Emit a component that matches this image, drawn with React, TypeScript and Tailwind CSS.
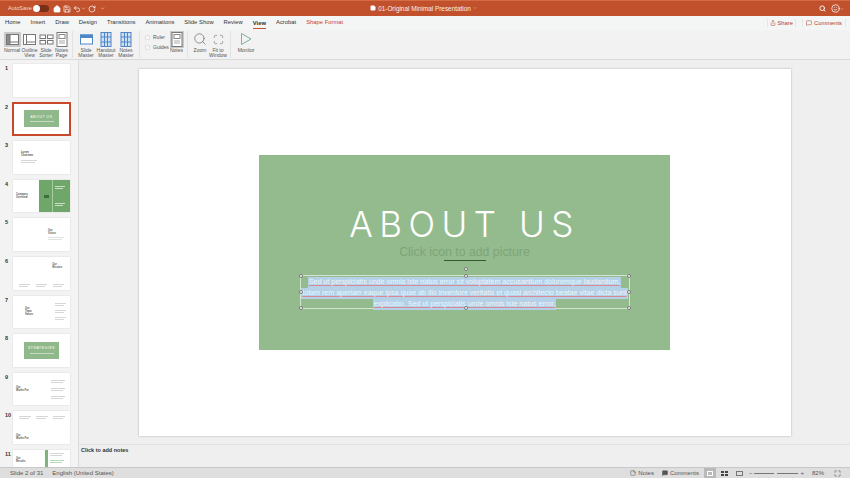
import { ReactNode } from "react";
import { Home, Save, Undo2, RotateCw, Search, Smile, Share, MessageSquare, ChevronDown, StickyNote, Maximize } from "lucide-react";

const tabs = ["Home", "Insert", "Draw", "Design", "Transitions", "Animations", "Slide Show", "Review", "View", "Acrobat", "Shape Format"];

function Bars({ n = 2, w = 14, color = "bg-[#d6d6d6]" }: { n?: number; w?: number; color?: string }) {
  return (
    <div className="flex flex-col gap-px">
      {Array.from({ length: n }).map((_, i) => (
        <div key={i} className={`h-px ${color}`} style={{ width: w - i * 2 }} />
      ))}
    </div>
  );
}

function Title({ lines }: { lines: string[] }) {
  return (
    <div className="text-[2.6px] font-semibold leading-[3px] text-[#555]">
      {lines.map((l) => (
        <div key={l}>{l}</div>
      ))}
    </div>
  );
}

function GreenCenter({ label }: { label: string }) {
  return (
    <div className="flex h-full items-center justify-center">
      <div className="flex h-[17px] w-[35px] flex-col items-center justify-center gap-[2px] bg-[#8fb98a]">
        <div className="text-[3.4px] leading-none tracking-[0.6px] text-white">{label}</div>
        <div className="h-px w-[24px] bg-[#c3dcc0]" />
      </div>
    </div>
  );
}

const slides: ReactNode[] = [
  null,
  <GreenCenter label="ABOUT US" />,
  <div className="flex h-full flex-col justify-center gap-[3px] pl-[8px]">
    <Title lines={["Lorem", "Chairman"]} />
    <Bars w={16} />
  </div>,
  <div className="flex h-full">
    <div className="flex w-[26px] flex-col justify-center pl-[3px]">
      <Title lines={["Company", "Overview"]} />
    </div>
    <div className="flex flex-1 items-center justify-between bg-[#6fa76b] px-[5px]">
      <div className="h-[3px] w-[5px] bg-[#3e6f3b]" />
      <div className="flex h-full flex-col justify-around border-l border-[#a8cba5] pl-[2px]">
        <Bars w={10} color="bg-[#c8dfc6]" />
        <Bars w={10} color="bg-[#c8dfc6]" />
      </div>
    </div>
  </div>,
  <div className="flex h-full flex-col items-end justify-center gap-[2px] pr-[6px]">
    <div className="w-[16px]">
      <Title lines={["Our", "Vision"]} />
    </div>
    <Bars w={16} color="bg-[#e0e0e0]" />
  </div>,
  <div className="flex h-full flex-col justify-between pb-[3px] pt-[6px]">
    <div className="flex justify-end pr-[8px]">
      <Title lines={["Our", "Mission"]} />
    </div>
    <div className="flex justify-around px-[3px]">
      <Bars w={11} />
      <Bars w={11} />
      <Bars w={11} />
    </div>
  </div>,
  <div className="flex h-full items-center justify-between pl-[12px] pr-[4px]">
    <Title lines={["Our", "Team", "Values"]} />
    <div className="flex flex-col gap-[4px]">
      <Bars w={11} />
      <Bars w={11} />
      <Bars w={11} />
    </div>
  </div>,
  <GreenCenter label="STRATEGIES" />,
  <div className="flex h-full items-center justify-between pl-[3px] pr-[5px]">
    <Title lines={["Our", "Works For"]} />
    <div className="flex flex-col gap-[5px]">
      <Bars w={14} />
      <Bars w={14} />
      <Bars w={14} />
    </div>
  </div>,
  <div className="flex h-full flex-col justify-between pb-[4px] pt-[5px]">
    <div className="flex justify-around px-[3px]">
      <Bars w={12} />
      <Bars w={12} />
      <Bars w={12} />
    </div>
    <div className="pl-[3px]">
      <Title lines={["Our", "Works For"]} />
    </div>
  </div>,
  <div className="flex h-full">
    <div className="w-[32px] pl-[3px] pt-[7px]">
      <Title lines={["Our", "Results"]} />
    </div>
    <div className="h-full w-[3px] bg-[#7fb47b]" />
    <div className="flex flex-1 flex-col gap-[4px] pl-[2px] pt-[3px]">
      <Bars w={14} />
      <Bars w={14} color="bg-[#b9d8b6]" />
    </div>
  </div>,
];

function RibbonItem({ icon, label, width }: { icon: ReactNode; label: string; width: number }) {
  return (
    <div className="flex shrink-0 flex-col items-center" style={{ width }}>
      <div className="flex h-[16px] items-center justify-center">{icon}</div>
      <div className="whitespace-pre-line pt-[1px] text-center text-[5px] leading-[5.4px] text-[#555]">{label}</div>
    </div>
  );
}

function Sep() {
  return <div className="mx-[3px] h-[27px] w-px shrink-0 bg-[#e2e2e2]" />;
}

function PageIcon({ kind }: { kind: string }) {
  const blue = "#4f86c6";
  return (
    <svg width="15" height="13" viewBox="0 0 15 13" fill="none" stroke="#777">
      {kind === "normal" && (
        <>
          <rect x="1.5" y="1.5" width="12" height="10" fill="#fff" />
          <rect x="1.5" y="1.5" width="3.5" height="10" fill="#8a8a8a" />
          <line x1="5" y1="9" x2="13.5" y2="9" />
        </>
      )}
      {kind === "outline" && (
        <>
          <rect x="1.5" y="1.5" width="12" height="10" fill="#fff" />
          <line x1="4.5" y1="1.5" x2="4.5" y2="11.5" />
          <line x1="5" y1="9" x2="13.5" y2="9" />
        </>
      )}
      {kind === "sorter" && (
        <>
          <rect x="1" y="2" width="5.5" height="3.5" fill="#fff" />
          <rect x="8.5" y="2" width="5.5" height="3.5" fill="#fff" />
          <rect x="1" y="7.5" width="5.5" height="3.5" fill="#fff" />
          <rect x="8.5" y="7.5" width="5.5" height="3.5" fill="#fff" />
        </>
      )}
      {kind === "master" && (
        <>
          <rect x="1.5" y="2" width="12" height="9" fill="#fff" stroke={blue} />
          <rect x="1.5" y="2" width="12" height="2.5" fill={blue} stroke={blue} />
        </>
      )}
    </svg>
  );
}

function TallPage({ blue, lines }: { blue?: boolean; lines?: boolean }) {
  return (
    <svg width="12" height="15" viewBox="0 0 12 15" fill="none">
      <rect x="1" y="0.5" width="10" height="14" fill={blue ? "#cfe0f3" : "#fff"} stroke={blue ? "#4f86c6" : "#777"} />
      {blue ? (
        <path d="M1 5h10M1 10h10M4.5.5v14M7.5.5v14" stroke="#4f86c6" />
      ) : (
        <>
          <rect x="3" y="2.5" width="6" height="4" stroke="#888" />
          {lines && <path d="M3 9h6M3 11h6" stroke="#aaa" />}
        </>
      )}
    </svg>
  );
}

function Handle({ className }: { className: string }) {
  return <div className={`absolute size-[4px] rounded-full border border-[#777] bg-white ${className}`} />;
}

function SelLine({ children }: { children: string }) {
  return (
    <div className="flex h-[11px] justify-center">
      <span className="whitespace-nowrap bg-[#b4d1e8] px-[1px] text-[7.1px] leading-[11px] text-[#eef5fa] underline decoration-[#d88b96]">
        {children}
      </span>
    </div>
  );
}

export default function App() {
  return (
    <div className="flex h-[478px] w-[850px] flex-col overflow-hidden bg-[#efefef] font-['Liberation_Sans',sans-serif]">
      {/* Title bar */}
      <div className="flex h-[16px] shrink-0 items-center border-t border-[#d66c45] bg-[#c1512c] pl-[8px] pr-[6px] text-white">
        <span className="w-[23px] text-[5.5px] text-[#f5d9cd]">AutoSave</span>
        <div className="ml-[2px] flex h-[7px] w-[16px] items-center rounded-full bg-[#7a2f18]">
          <div className="size-[7px] rounded-full bg-white" />
        </div>
        <Home size={8} className="ml-[4px]" fill="white" />
        <Save size={8} className="ml-[2px]" />
        <Undo2 size={8} className="ml-[2px]" />
        <ChevronDown size={5} />
        <RotateCw size={8} className="ml-[2px]" />
        <ChevronDown size={5} className="ml-[4px]" />
        <div className="flex flex-1 items-center justify-center gap-[2px] pr-[77px] text-[6.4px] text-[#fbeee8]">
          <StickyNote size={6} fill="white" />
          <span>01-Original Minimal Presentation</span>
          <ChevronDown size={4} />
        </div>
        <Search size={7} strokeWidth={3} className="mr-[5px]" />
        <Smile size={9} />
        <ChevronDown size={4} />
      </div>

      {/* Tabs */}
      <div className="flex h-[14px] shrink-0 items-center bg-[#f4f6f5] pl-[5px] pr-[4px] text-[5.85px] text-[#333]">
        <div className="flex gap-[10px]">
          {tabs.map((t) => (
            <span
              key={t}
              className={
                t === "View"
                  ? "border-b border-[#c1512c] font-bold leading-[10px]"
                  : t === "Shape Format"
                    ? "text-[#c8443a]"
                    : ""
              }
            >
              {t}
            </span>
          ))}
        </div>
        <div className="ml-auto flex items-center gap-[6px] text-[5.8px] text-[#b0402a]">
          <div className="flex items-center gap-[2px] border-x border-[#e6e6e6] px-[2px]">
            <Share size={6} />
            <span>Share</span>
          </div>
          <div className="flex items-center gap-[2px] border-x border-[#e6e6e6] px-[3px]">
            <MessageSquare size={6} />
            <span>Comments</span>
          </div>
        </div>
      </div>

      {/* Ribbon */}
      <div className="flex h-[30px] shrink-0 items-start border-b border-[#d9d9d9] bg-[#f2f2f2] pl-[3px] pt-[1px]">
        <RibbonItem width={18} label="Normal" icon={<div className="rounded-[1px] bg-[#c9c9c9] p-[1px]"><PageIcon kind="normal" /></div>} />
        <RibbonItem width={17} label={"Outline\nView"} icon={<PageIcon kind="outline" />} />
        <RibbonItem width={16} label={"Slide\nSorter"} icon={<PageIcon kind="sorter" />} />
        <RibbonItem width={15} label={"Notes\nPage"} icon={<TallPage lines />} />
        <Sep />
        <RibbonItem width={20} label={"Slide\nMaster"} icon={<PageIcon kind="master" />} />
        <RibbonItem width={20} label={"Handout\nMaster"} icon={<TallPage blue />} />
        <RibbonItem width={20} label={"Notes\nMaster"} icon={<TallPage blue />} />
        <Sep />
        <div className="flex w-[26px] shrink-0 flex-col gap-[5px] pl-[2px] pt-[4px] text-[5px] leading-[5px] text-[#555]">
          <div className="flex items-center gap-[3px]"><div className="size-[5px] rounded-[1px] border border-[#e0e0e0] bg-[#f8f8f8]" />Ruler</div>
          <div className="flex items-center gap-[3px]"><div className="size-[5px] rounded-[1px] border border-[#e0e0e0] bg-[#f8f8f8]" />Guides</div>
        </div>
        <RibbonItem width={15} label="Notes" icon={<div className="bg-[#c9c9c9] p-px"><TallPage lines /></div>} />
        <Sep />
        <RibbonItem width={18} label="Zoom" icon={<Search size={14} strokeWidth={1.2} color="#666" />} />
        <RibbonItem width={18} label={"Fit to\nWindow"} icon={<Maximize size={11} strokeWidth={1.2} color="#666" />} />
        <Sep />
        <RibbonItem
          width={24}
          label="Monitor"
          icon={
            <svg width="12" height="14" viewBox="0 0 12 14" fill="none">
              <path d="M1.5 1.5 11 7l-9.5 5.5z" stroke="#7fb09a" />
            </svg>
          }
        />
      </div>

      {/* Main */}
      <div className="flex min-h-0 flex-1">
        <div className="w-[79px] shrink-0 overflow-hidden border-r border-[#dcdcdc] bg-[#f3f3f3] pt-[4px]">
          {slides.map((content, i) => (
            <div key={i} className="mb-[6px] flex pl-[5px]">
              <span className="w-[8px] text-[5.5px] font-bold leading-[8px] text-[#333]">{i + 1}</span>
              <div
                className={`h-[32.6px] w-[57px] shrink-0 overflow-hidden bg-white ${
                  i === 1 ? "outline-2 -outline-offset-1 outline-[#c9472b]" : "shadow-[0_0_1px_#bbb]"
                }`}
              >
                {content}
              </div>
            </div>
          ))}
        </div>

        <div className="flex min-w-0 flex-1 flex-col">
          <div className="flex h-[384px] shrink-0 items-start justify-center pt-[9px]">
            <div className="flex h-[367px] w-[652px] items-center justify-center bg-white shadow-[0_0_2px_#aaa]">
              <div className="flex h-[195px] w-[411px] flex-col items-center bg-[#94bb8e] pt-[52px]">
                <div className="font-['Inter',sans-serif] text-[35px] font-light leading-[34px] tracking-[6.5px] text-white">
                  ABOUT US
                </div>
                <div className="mt-[4px] text-[12.3px] leading-[14px] text-[#7ea479]">Click icon to add picture</div>
                <div className="mt-[1px] h-px w-[42px] bg-[#2f5a2c]" />
                <div className="relative mt-[14px] h-[34px] w-[330px] border border-[#d5e3d2] pt-[1px]">
                  <Handle className="-left-[2px] -top-[2px]" />
                  <Handle className="-right-[2px] -top-[2px]" />
                  <Handle className="-left-[2px] top-[14px]" />
                  <Handle className="-right-[2px] top-[14px]" />
                  <Handle className="-left-[2px] -bottom-[2px]" />
                  <Handle className="-right-[2px] -bottom-[2px]" />
                  <Handle className="left-[163px] -top-[2px]" />
                  <Handle className="left-[163px] -bottom-[2px]" />
                  <Handle className="left-[163px] -top-[9px]" />
                  <SelLine>Sed ut perspiciatis unde omnis iste natus error sit voluptatem accusantium doloremque laudantium,</SelLine>
                  <SelLine>totam rem aperiam eaque ipsa quae ab illo inventore veritatis et quasi architecto beatae vitae dicta sunt</SelLine>
                  <SelLine>explicabo. Sed ut perspiciatis unde omnis iste natus error.</SelLine>
                </div>
              </div>
            </div>
          </div>
          <div className="flex-1 border-t border-[#e2e2e2] pl-[2px] pt-[1px] text-[5.5px] font-bold leading-[8px] text-[#333]">
            Click to add notes
          </div>
        </div>
      </div>

      {/* Status bar */}
      <div className="flex h-[11px] shrink-0 items-center border-t border-[#c8c8c8] bg-[#dedede] pl-[10px] pr-[9px] text-[6px] text-[#555]">
        <span>Slide 2 of 31</span>
        <span className="ml-[9px]">English (United States)</span>
        <div className="ml-auto flex items-center">
          <StickyNote size={6} />
          <span className="ml-[2px]">Notes</span>
          <MessageSquare size={6} fill="#555" className="ml-[8px]" />
          <span className="ml-[2px]">Comments</span>
          <div className="ml-[5px] flex h-[10px] w-[12px] items-center justify-center bg-[#b9b9b9]">
            <div className="h-[5px] w-[6px] border border-white" />
          </div>
          <div className="ml-[5px] grid grid-cols-2 gap-[1px]">
            <div className="h-[2px] w-[3px] bg-[#444]" />
            <div className="h-[2px] w-[3px] bg-[#444]" />
            <div className="h-[2px] w-[3px] bg-[#444]" />
            <div className="h-[2px] w-[3px] bg-[#444]" />
          </div>
          <div className="ml-[8px] h-[5px] w-[7px] border border-[#777]" />
          <span className="ml-[6px]">−</span>
          <div className="relative ml-[2px] h-px w-[44px] bg-[#777]">
            <div className="absolute -top-[2px] left-[20px] h-[5px] w-[3px] bg-[#dedede]" />
          </div>
          <span className="ml-[2px]">+</span>
          <span className="ml-[8px]">82%</span>
          <Maximize size={7} className="ml-[10px]" />
        </div>
      </div>
    </div>
  );
}
